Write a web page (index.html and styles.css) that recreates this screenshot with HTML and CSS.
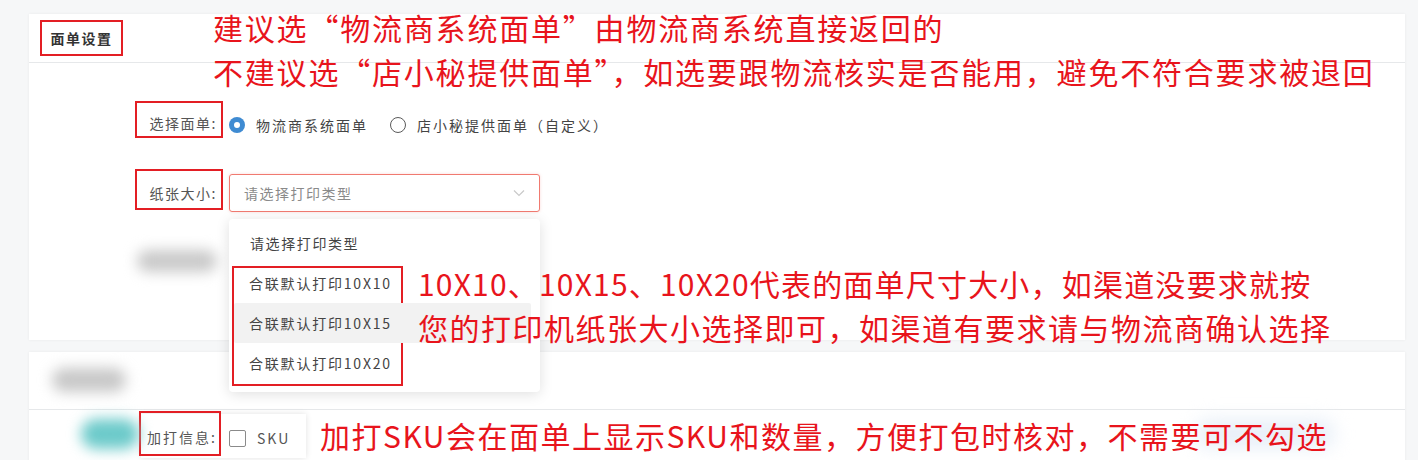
FILE: index.html
```html
<!DOCTYPE html>
<html lang="zh-CN">
<head>
    <meta charset="UTF-8">
    <title>面单设置</title>
    <link rel="stylesheet" href="styles.css">
</head>
<body>
    <div class="page">

        <section class="card card-main">
            <div class="card-head">
                <h2 class="mark head-title">面单设置</h2>
            </div>

            <div class="row row-first">
                <div class="mark label">选择面单:</div>
                <label class="radio checked"><span class="dot"></span>物流商系统面单</label>
                <label class="radio"><span class="dot"></span>店小秘提供面单（自定义）</label>
            </div>

            <div class="row row-second">
                <div class="mark label label-tall">纸张大小:</div>
                <div class="select">
                    <span>请选择打印类型</span>
                    <svg class="chevron" width="12" height="8" viewBox="0 0 12 8">
                        <path d="M1 1.5 L6 6.5 L11 1.5" fill="none" stroke="#c9c9c9" stroke-width="1.2"/>
                    </svg>
                </div>
            </div>

            <div class="blur-zone">
                <span class="blur blur-label"></span>
            </div>
        </section>

        <section class="card card-sub">
            <div class="card-head sub-head">
                <span class="blur blur-title"></span>
            </div>
            <div class="row row-extra">
                <span class="blur blur-teal"></span>
                <div class="paste">
                    <div class="mark label label-extra">加打信息:</div>
                    <label class="check"><span class="box"></span>SKU</label>
                </div>
                <span class="blur blur-blue"></span>
            </div>
        </section>

        <!-- dropdown of the select, open -->
        <ul class="dropdown">
            <li>请选择打印类型</li>
            <li class="sizes mark">
                <ul>
                    <li>合联默认打印10X10</li>
                    <li class="hover">合联默认打印10X15</li>
                    <li>合联默认打印10X20</li>
                </ul>
            </li>
        </ul>

        <!-- annotations -->
        <p class="note note-top">建议选“物流商系统面单”由物流商系统直接返回的<br>不建议选“店小秘提供面单”，如选要跟物流核实是否能用，避免不符合要求被退回</p>
        <p class="note note-mid"><span class="tight">10X10、10X15、10X20代表的面单尺寸大小，如渠道没要求就按</span><br>您的打印机纸张大小选择即可，如渠道有要求请与物流商确认选择</p>
        <p class="note note-bottom">加打SKU会在面单上显示SKU和数量，方便打包时核对，不需要可不勾选</p>

    </div>
</body>
</html>
```

FILE: styles.css
```css
body {
    margin: 0;
    background-color: #f6f7f8;
    font-family: "Noto Sans CJK SC", "Noto Sans", sans-serif;
    color: #555;
    overflow: hidden;
}

.page {
    position: relative;
    width: 1418px;
    height: 460px;
    padding: 14px 13px 0 29px;
    box-sizing: border-box;
}

.card {
    background-color: #fff;
    box-shadow: 0 0 3px rgba(0, 0, 0, 0.06);
}

.card-main {
    height: 326px;
}

.card-head {
    height: 49px;
    border-bottom: 1px solid #e6e8ea;
    padding: 6px 0 0 11px;
    box-sizing: border-box;
}

.mark {
    border: 2px solid #e31e24;
    box-sizing: border-box;
}

.head-title {
    margin: 0;
    width: 83px;
    height: 36px;
    font-size: 14px;
    font-weight: bold;
    letter-spacing: 1.5px;
    color: #333;
    display: flex;
    align-items: center;
    justify-content: center;
}

.row {
    display: flex;
    align-items: center;
    gap: 6px;
    padding-left: 106px;
    font-size: 14px;
    letter-spacing: 2px;
}

.row-first {
    margin-top: 38px;
    height: 37px;
    align-items: flex-start;
}

.row-first .radio {
    margin-top: 14px;
}

.row-second {
    margin-top: 31px;
    align-items: flex-start;
}

.label {
    width: 88px;
    height: 37px;
    padding: 6px 4px 0 0;
    display: flex;
    align-items: center;
    justify-content: flex-end;
    color: #555;
    letter-spacing: 1.5px;
}

.label-tall {
    height: 41px;
}

.radio {
    display: flex;
    align-items: center;
    gap: 11px;
    margin-right: 16px;
    color: #444;
}

.radio .dot {
    width: 16px;
    height: 16px;
    border-radius: 50%;
    border: 1px solid #5a5a5a;
    box-sizing: border-box;
    position: relative;
}

.radio.checked .dot {
    border: none;
    background-color: #3f8bd2;
}

.radio.checked .dot::after {
    content: "";
    position: absolute;
    left: 5px;
    top: 5px;
    width: 6px;
    height: 6px;
    border-radius: 50%;
    background-color: #fff;
}

.select {
    margin-top: 5px;
    width: 311px;
    height: 38px;
    border: 1px solid #f07a70;
    border-radius: 3px;
    box-shadow: 0 0 3px rgba(240, 100, 90, 0.25);
    box-sizing: border-box;
    padding: 0 14px;
    display: flex;
    align-items: center;
    justify-content: space-between;
    color: #8a8a8a;
    letter-spacing: 1.5px;
}

.blur-zone {
    height: 110px;
    position: relative;
}

.blur {
    display: block;
    border-radius: 14px;
    filter: blur(7px);
}

.blur-label {
    margin: 38px 0 0 108px;
    width: 80px;
    height: 22px;
    background-color: #c9c9c9;
}

.card-sub {
    margin-top: 12px;
    height: 120px;
}

.sub-head {
    height: 58px;
    padding: 16px 0 0 23px;
}

.blur-title {
    width: 74px;
    height: 24px;
    background-color: #c8c8c8;
}

.row-extra {
    padding-left: 52px;
    gap: 0;
    height: 48px;
    position: relative;
}

.blur-teal {
    width: 58px;
    height: 30px;
    border-radius: 15px;
    background-color: #6ccaca;
    margin-right: 2px;
}

.paste {
    display: flex;
    align-items: center;
    width: 165px;
    height: 44px;
    background-color: #fff;
    box-shadow: 0 0 6px rgba(0, 0, 0, 0.12);
    margin-top: 4px;
}

.label-extra {
    width: 82px;
    height: 45px;
    margin: -5px 0 0 -2px;
    justify-content: flex-start;
    padding: 7px 0 0 6px;
    letter-spacing: 2px;
}

.check {
    display: flex;
    align-items: center;
    gap: 11px;
    margin: 4px 0 0 8px;
    color: #555;
    letter-spacing: 2px;
}

.check .box {
    width: 17px;
    height: 17px;
    border: 1px solid #8a8a8a;
    border-radius: 2px;
    box-sizing: border-box;
}

.blur-blue {
    margin-left: auto;
    margin-right: 70px;
    width: 140px;
    height: 30px;
    background-color: #e9f0f8;
    filter: blur(9px);
}

.dropdown {
    position: absolute;
    left: 229px;
    top: 219px;
    width: 311px;
    margin: 0;
    padding: 4px 5px 6px 5px;
    box-sizing: border-box;
    list-style: none;
    background-color: #fff;
    border-radius: 4px;
    box-shadow: 0 2px 14px rgba(0, 0, 0, 0.13);
    font-size: 14px;
    letter-spacing: 1.6px;
    color: #444;
}

.dropdown li {
    height: 40px;
    line-height: 40px;
    padding-left: 16px;
}

.dropdown .sizes {
    width: 171px;
    height: 120px;
    margin: 3px 0 0 -2px;
    padding: 0;
}

.dropdown .sizes ul {
    list-style: none;
    margin: -5px -130px 0 0;
    padding: 0;
}

.dropdown .sizes li {
    padding-left: 15px;
    letter-spacing: 1.8px;
}

.dropdown .hover {
    background-color: #f2f2f2;
    border-radius: 2px;
}

.note {
    position: absolute;
    margin: 0;
    font-size: 30px;
    line-height: 44px;
    letter-spacing: 1.8px;
    color: #e8141c;
    white-space: nowrap;
}

.note-top {
    left: 213px;
    top: 5px;
}

.note-mid {
    left: 418px;
    top: 261px;
    letter-spacing: 1.5px;
}

.note-mid .tight {
    letter-spacing: 1.2px;
}

.note-bottom {
    left: 320px;
    top: 413px;
    letter-spacing: 1.5px;
}
```
